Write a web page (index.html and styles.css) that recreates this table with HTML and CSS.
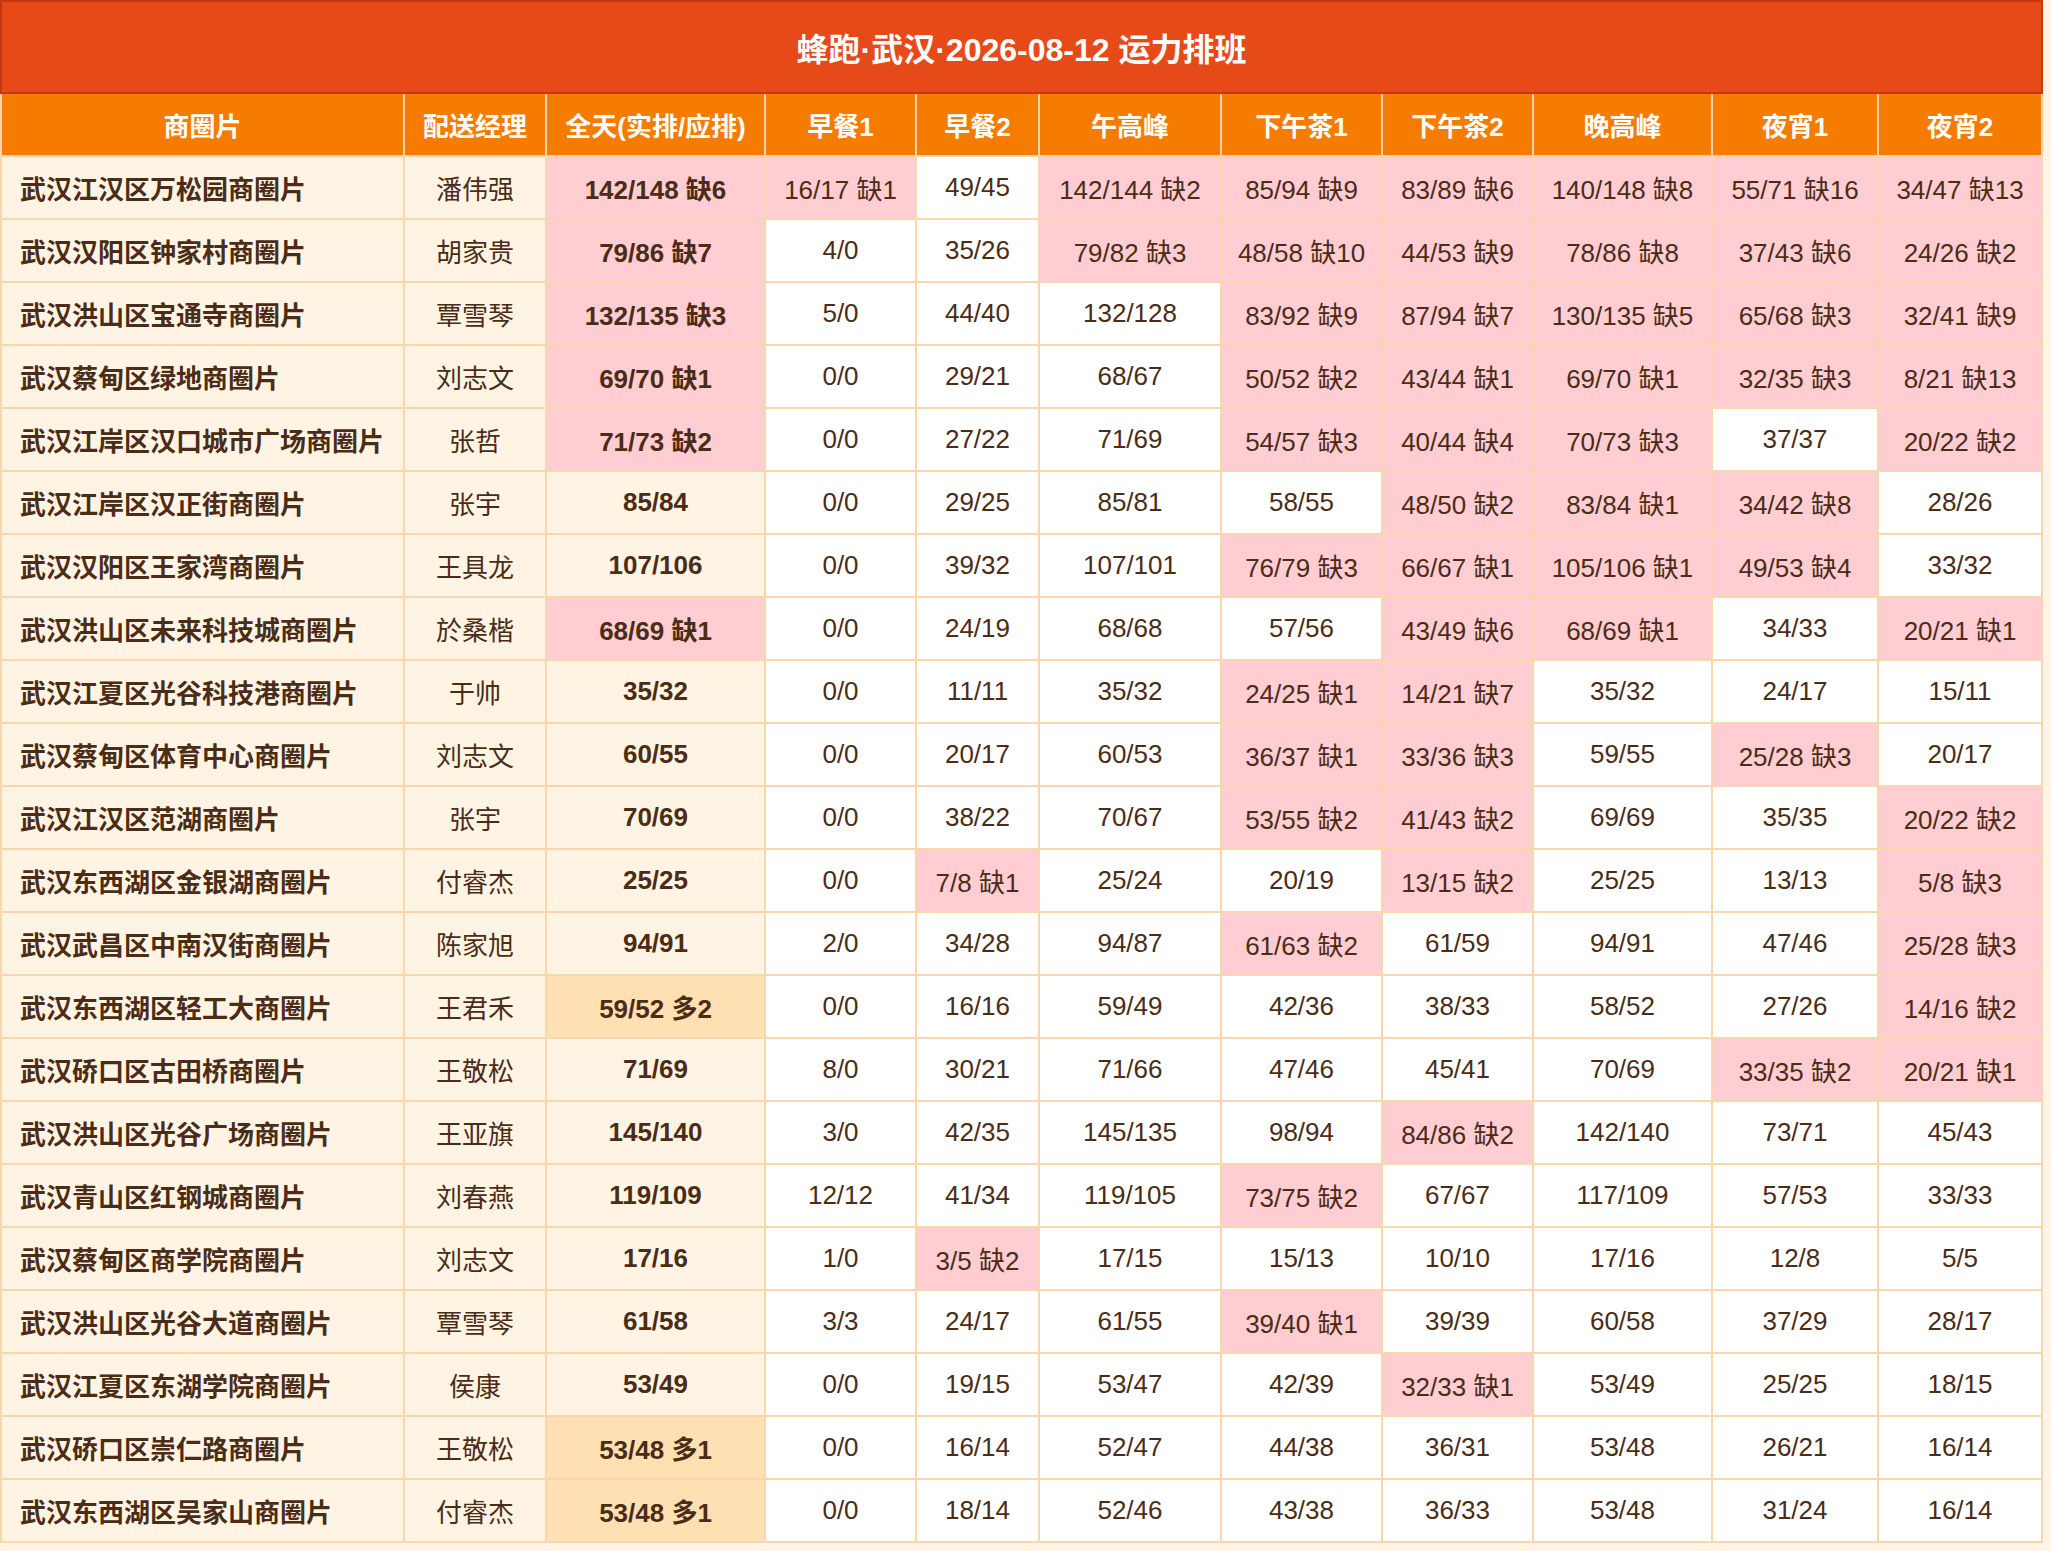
FILE: index.html
```html
<!DOCTYPE html>
<html lang="zh-CN">
<head>
<meta charset="utf-8">
<title>蜂跑·武汉·2026-08-12 运力排班</title>
<link rel="stylesheet" href="styles.css">
</head>
<body>
<div class="sheet">
  <div class="title">蜂跑·武汉·2026-08-12 运力排班</div>
  <table class="grid">
    <colgroup>
      <col class="c-area"><col class="c-mgr"><col class="c-day"><col class="c-b1"><col class="c-b2"><col class="c-noon"><col class="c-t1"><col class="c-t2"><col class="c-eve"><col class="c-n1"><col class="c-n2">
    </colgroup>
    <thead>
      <tr><th>商圈片</th><th>配送经理</th><th>全天(实排/应排)</th><th>早餐1</th><th>早餐2</th><th>午高峰</th><th>下午茶1</th><th>下午茶2</th><th>晚高峰</th><th>夜宵1</th><th>夜宵2</th></tr>
    </thead>
    <tbody>
      <tr><td class="area">武汉江汉区万松园商圈片</td><td class="mgr">潘伟强</td><td class="day short">142/148 缺6</td><td class="short">16/17 缺1</td><td>49/45</td><td class="short">142/144 缺2</td><td class="short">85/94 缺9</td><td class="short">83/89 缺6</td><td class="short">140/148 缺8</td><td class="short">55/71 缺16</td><td class="short">34/47 缺13</td></tr>
      <tr><td class="area">武汉汉阳区钟家村商圈片</td><td class="mgr">胡家贵</td><td class="day short">79/86 缺7</td><td>4/0</td><td>35/26</td><td class="short">79/82 缺3</td><td class="short">48/58 缺10</td><td class="short">44/53 缺9</td><td class="short">78/86 缺8</td><td class="short">37/43 缺6</td><td class="short">24/26 缺2</td></tr>
      <tr><td class="area">武汉洪山区宝通寺商圈片</td><td class="mgr">覃雪琴</td><td class="day short">132/135 缺3</td><td>5/0</td><td>44/40</td><td>132/128</td><td class="short">83/92 缺9</td><td class="short">87/94 缺7</td><td class="short">130/135 缺5</td><td class="short">65/68 缺3</td><td class="short">32/41 缺9</td></tr>
      <tr><td class="area">武汉蔡甸区绿地商圈片</td><td class="mgr">刘志文</td><td class="day short">69/70 缺1</td><td>0/0</td><td>29/21</td><td>68/67</td><td class="short">50/52 缺2</td><td class="short">43/44 缺1</td><td class="short">69/70 缺1</td><td class="short">32/35 缺3</td><td class="short">8/21 缺13</td></tr>
      <tr><td class="area">武汉江岸区汉口城市广场商圈片</td><td class="mgr">张哲</td><td class="day short">71/73 缺2</td><td>0/0</td><td>27/22</td><td>71/69</td><td class="short">54/57 缺3</td><td class="short">40/44 缺4</td><td class="short">70/73 缺3</td><td>37/37</td><td class="short">20/22 缺2</td></tr>
      <tr><td class="area">武汉江岸区汉正街商圈片</td><td class="mgr">张宇</td><td class="day">85/84</td><td>0/0</td><td>29/25</td><td>85/81</td><td>58/55</td><td class="short">48/50 缺2</td><td class="short">83/84 缺1</td><td class="short">34/42 缺8</td><td>28/26</td></tr>
      <tr><td class="area">武汉汉阳区王家湾商圈片</td><td class="mgr">王具龙</td><td class="day">107/106</td><td>0/0</td><td>39/32</td><td>107/101</td><td class="short">76/79 缺3</td><td class="short">66/67 缺1</td><td class="short">105/106 缺1</td><td class="short">49/53 缺4</td><td>33/32</td></tr>
      <tr><td class="area">武汉洪山区未来科技城商圈片</td><td class="mgr">於桑楷</td><td class="day short">68/69 缺1</td><td>0/0</td><td>24/19</td><td>68/68</td><td>57/56</td><td class="short">43/49 缺6</td><td class="short">68/69 缺1</td><td>34/33</td><td class="short">20/21 缺1</td></tr>
      <tr><td class="area">武汉江夏区光谷科技港商圈片</td><td class="mgr">于帅</td><td class="day">35/32</td><td>0/0</td><td>11/11</td><td>35/32</td><td class="short">24/25 缺1</td><td class="short">14/21 缺7</td><td>35/32</td><td>24/17</td><td>15/11</td></tr>
      <tr><td class="area">武汉蔡甸区体育中心商圈片</td><td class="mgr">刘志文</td><td class="day">60/55</td><td>0/0</td><td>20/17</td><td>60/53</td><td class="short">36/37 缺1</td><td class="short">33/36 缺3</td><td>59/55</td><td class="short">25/28 缺3</td><td>20/17</td></tr>
      <tr><td class="area">武汉江汉区范湖商圈片</td><td class="mgr">张宇</td><td class="day">70/69</td><td>0/0</td><td>38/22</td><td>70/67</td><td class="short">53/55 缺2</td><td class="short">41/43 缺2</td><td>69/69</td><td>35/35</td><td class="short">20/22 缺2</td></tr>
      <tr><td class="area">武汉东西湖区金银湖商圈片</td><td class="mgr">付睿杰</td><td class="day">25/25</td><td>0/0</td><td class="short">7/8 缺1</td><td>25/24</td><td>20/19</td><td class="short">13/15 缺2</td><td>25/25</td><td>13/13</td><td class="short">5/8 缺3</td></tr>
      <tr><td class="area">武汉武昌区中南汉街商圈片</td><td class="mgr">陈家旭</td><td class="day">94/91</td><td>2/0</td><td>34/28</td><td>94/87</td><td class="short">61/63 缺2</td><td>61/59</td><td>94/91</td><td>47/46</td><td class="short">25/28 缺3</td></tr>
      <tr><td class="area">武汉东西湖区轻工大商圈片</td><td class="mgr">王君禾</td><td class="day over">59/52 多2</td><td>0/0</td><td>16/16</td><td>59/49</td><td>42/36</td><td>38/33</td><td>58/52</td><td>27/26</td><td class="short">14/16 缺2</td></tr>
      <tr><td class="area">武汉硚口区古田桥商圈片</td><td class="mgr">王敬松</td><td class="day">71/69</td><td>8/0</td><td>30/21</td><td>71/66</td><td>47/46</td><td>45/41</td><td>70/69</td><td class="short">33/35 缺2</td><td class="short">20/21 缺1</td></tr>
      <tr><td class="area">武汉洪山区光谷广场商圈片</td><td class="mgr">王亚旗</td><td class="day">145/140</td><td>3/0</td><td>42/35</td><td>145/135</td><td>98/94</td><td class="short">84/86 缺2</td><td>142/140</td><td>73/71</td><td>45/43</td></tr>
      <tr><td class="area">武汉青山区红钢城商圈片</td><td class="mgr">刘春燕</td><td class="day">119/109</td><td>12/12</td><td>41/34</td><td>119/105</td><td class="short">73/75 缺2</td><td>67/67</td><td>117/109</td><td>57/53</td><td>33/33</td></tr>
      <tr><td class="area">武汉蔡甸区商学院商圈片</td><td class="mgr">刘志文</td><td class="day">17/16</td><td>1/0</td><td class="short">3/5 缺2</td><td>17/15</td><td>15/13</td><td>10/10</td><td>17/16</td><td>12/8</td><td>5/5</td></tr>
      <tr><td class="area">武汉洪山区光谷大道商圈片</td><td class="mgr">覃雪琴</td><td class="day">61/58</td><td>3/3</td><td>24/17</td><td>61/55</td><td class="short">39/40 缺1</td><td>39/39</td><td>60/58</td><td>37/29</td><td>28/17</td></tr>
      <tr><td class="area">武汉江夏区东湖学院商圈片</td><td class="mgr">侯康</td><td class="day">53/49</td><td>0/0</td><td>19/15</td><td>53/47</td><td>42/39</td><td class="short">32/33 缺1</td><td>53/49</td><td>25/25</td><td>18/15</td></tr>
      <tr><td class="area">武汉硚口区崇仁路商圈片</td><td class="mgr">王敬松</td><td class="day over">53/48 多1</td><td>0/0</td><td>16/14</td><td>52/47</td><td>44/38</td><td>36/31</td><td>53/48</td><td>26/21</td><td>16/14</td></tr>
      <tr><td class="area">武汉东西湖区吴家山商圈片</td><td class="mgr">付睿杰</td><td class="day over">53/48 多1</td><td>0/0</td><td>18/14</td><td>52/46</td><td>43/38</td><td>36/33</td><td>53/48</td><td>31/24</td><td>16/14</td></tr>
    </tbody>
  </table>
</div>
</body>
</html>
```
FILE: styles.css
```css
html, body {
  margin: 0;
  padding: 0;
  background: #fff4e5;
}

body {
  font-family: "Liberation Sans", "Noto Sans CJK SC", sans-serif;
  color: #4b2c16;
}

.sheet {
  width: 2043px;
}

.title {
  height: 90px;
  border: 2px solid #c4370f;
  background: #e64a19;
  color: #ffffff;
  font-size: 32px;
  font-weight: 700;
  display: flex;
  align-items: center;
  justify-content: center;
}

.grid {
  width: 2043px;
  border-collapse: collapse;
  table-layout: fixed;
}

.c-area { width: 403px; }
.c-mgr { width: 142px; }
.c-day { width: 219px; }
.c-b1 { width: 151px; }
.c-b2 { width: 123px; }
.c-noon { width: 182px; }
.c-t1 { width: 161px; }
.c-t2 { width: 151px; }
.c-eve { width: 179px; }
.c-n1 { width: 166px; }
.c-n2 { width: 164px; }

.grid th,
.grid td {
  height: 61px;
  padding: 0 6px;
  border: 2px solid #f9d7ae;
  font-size: 26px;
  text-align: center;
  white-space: nowrap;
  overflow: hidden;
}

.grid th {
  border-top: none;
  background: #f57c00;
  color: #ffffff;
  font-weight: 700;
}

.grid td {
  background: #ffffff;
  font-weight: 400;
}

.grid td.area {
  background: #fff4e4;
  font-weight: 700;
  text-align: left;
  padding-left: 18px;
}

.grid td.mgr {
  background: #fff4e4;
}

.grid td.day {
  background: #fff4e4;
  font-weight: 700;
}

.grid td.short {
  background: #ffcdd2;
}

.grid td.over {
  background: #ffe0b2;
}
```
